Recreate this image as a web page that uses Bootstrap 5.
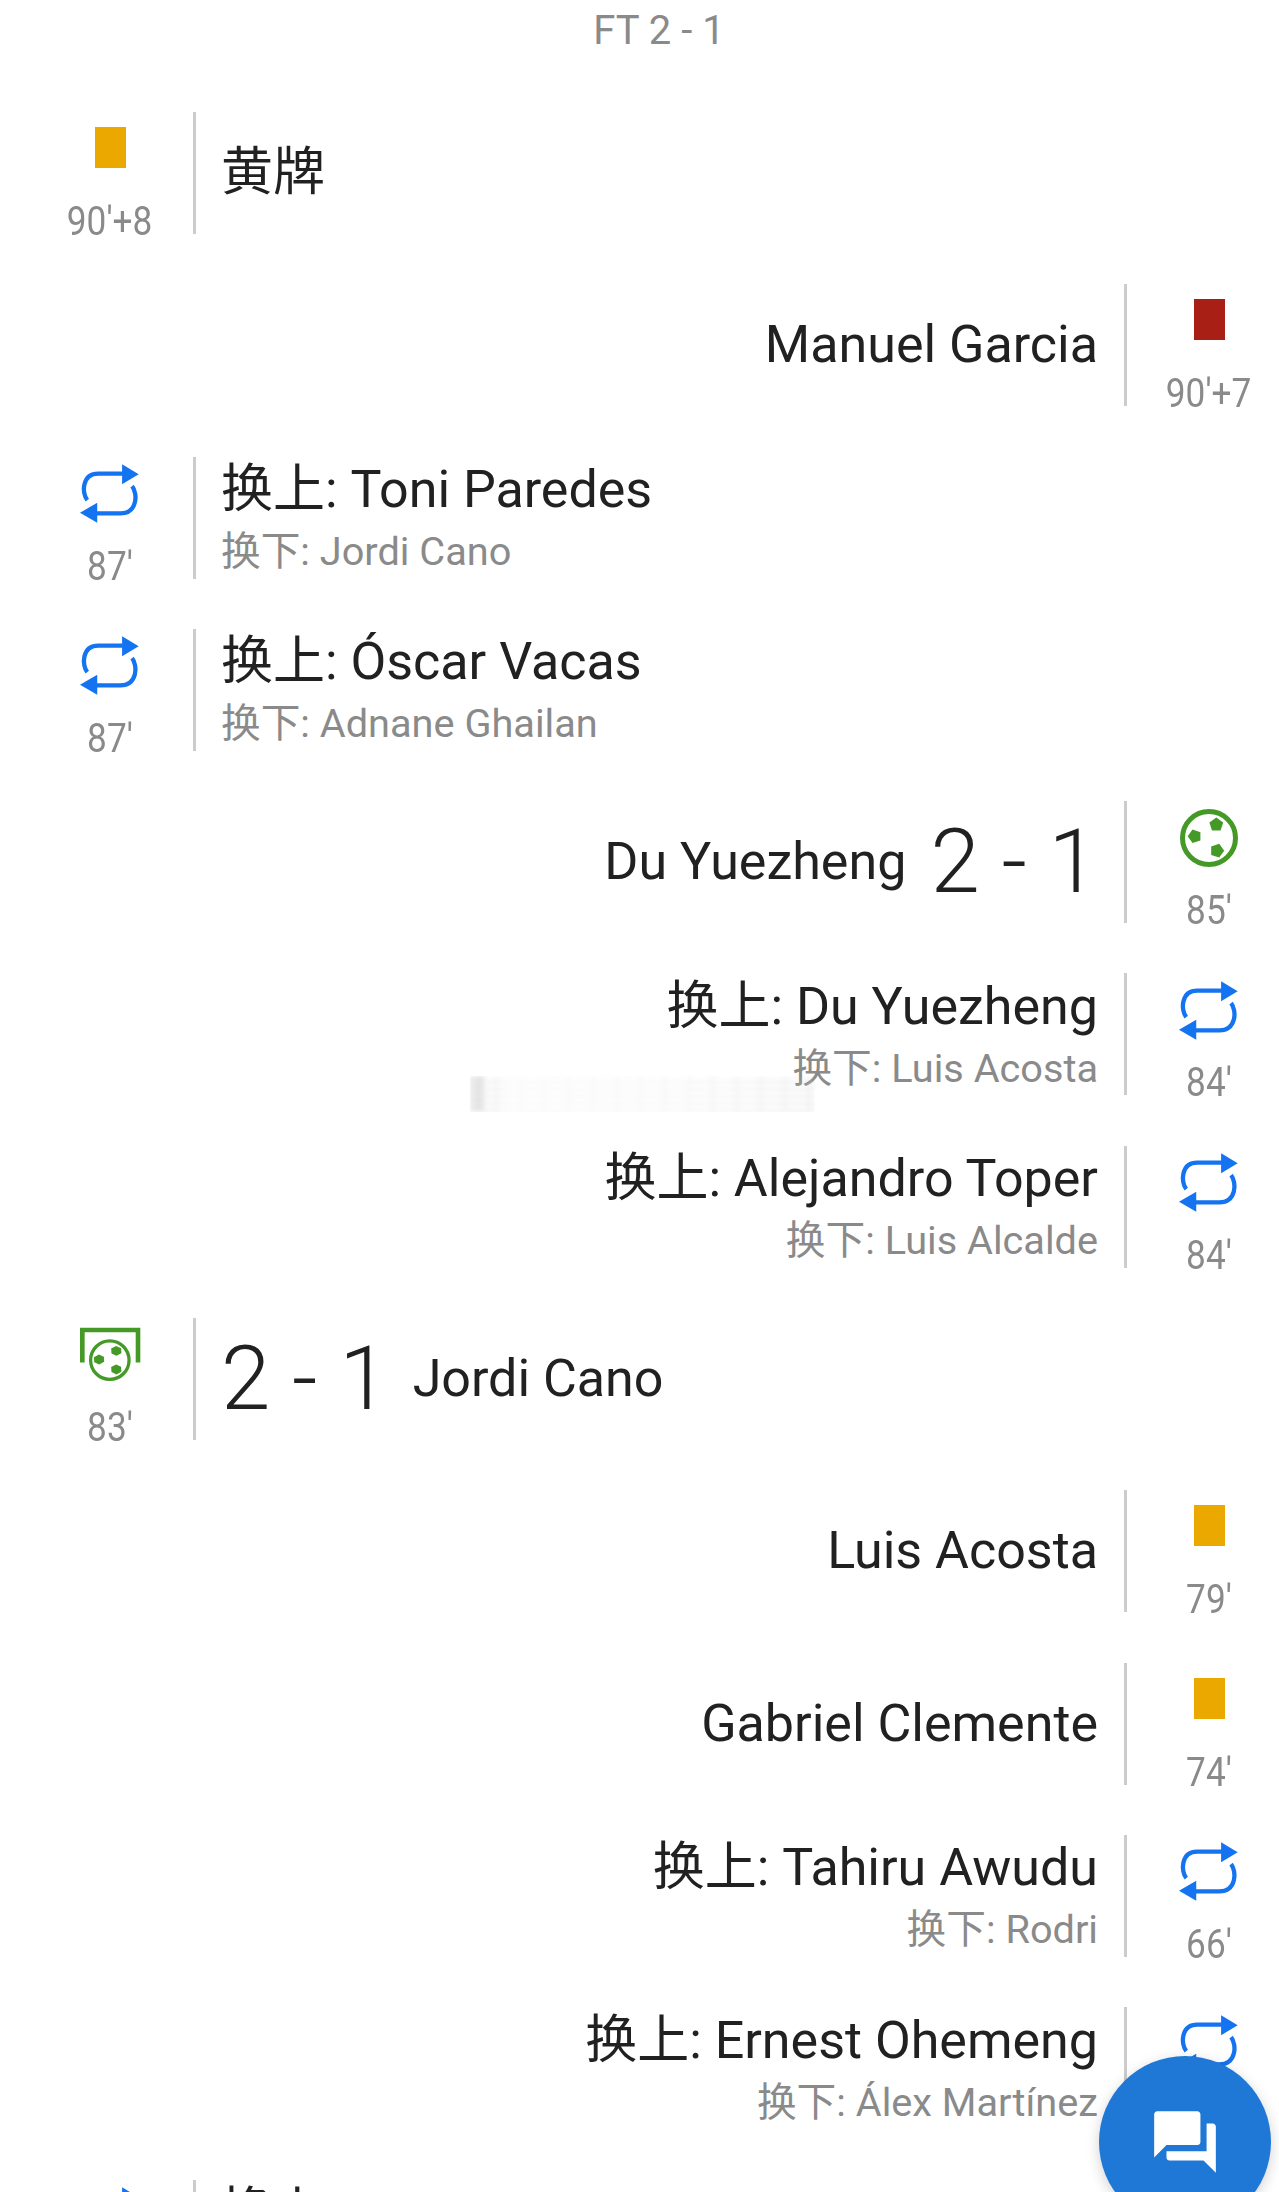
<!DOCTYPE html>
<html lang="zh">
<head>
<meta charset="utf-8">
<title>Match events</title>
<link href="https://cdn.jsdelivr.net/npm/bootstrap@5.3.0/dist/css/bootstrap.min.css" rel="stylesheet">
<style>
html,body{height:2192px;overflow:hidden;background:#fff}
body{font-family:Roboto,"Noto Sans CJK SC",sans-serif;color:#212121;position:relative}
.ev-page{padding-left:39px}
.ev-status{height:112px;padding-top:6px;text-align:center;font-size:40px;line-height:50px;color:#8a8a8a}
.ev-row{height:122px;margin-bottom:50.3px}
.ev-time{width:142px;flex:none;height:122px}
.ev-right .ev-time{width:140px}
.ev-icon{height:74px}
.ev-min{height:24px;line-height:24px;margin-top:24px;font-size:40px;color:#8a8a8a;transform:scaleX(.88);white-space:nowrap}
.ev-body{height:122px;flex:1 1 auto;min-width:0}
.ev-left .ev-body{border-left:3px solid #ccc;margin-left:12px;padding-left:25px}
.ev-right .ev-body{border-right:3px solid #ccc;margin-right:12px;padding-right:26px;text-align:right}
.ev-two{padding-top:7px}
.ev-main{font-size:52px;line-height:62px;white-space:nowrap}
.ev-sub{font-size:39.7px;line-height:62px;color:#8a8a8a;white-space:nowrap}
.ev-name{font-size:52px;line-height:62px}
.ev-score{font-size:89px;line-height:100px;font-weight:300}
.ev-card{width:31px;height:41px;display:block;margin-top:-3px}
.ev-yellow{background:#eba900}
.ev-red{background:#a82015}
.ev-smear{position:absolute;left:470px;top:1076px;width:345px;height:36px;filter:blur(2px);opacity:.35;background:repeating-linear-gradient(0deg,rgba(200,200,200,.8) 0 3px,transparent 3px 7px),repeating-linear-gradient(90deg,rgba(215,215,215,.5) 0 6px,transparent 6px 24px),linear-gradient(90deg,#aaa 0 14px,transparent 14px);-webkit-mask-image:linear-gradient(90deg,#000 0 5%,rgba(0,0,0,.35) 12%,rgba(0,0,0,.5) 60%,#000 100%);mask-image:linear-gradient(90deg,#000 0 5%,rgba(0,0,0,.35) 12%,rgba(0,0,0,.5) 60%,#000 100%)}
.ev-fab{position:absolute;left:1099px;top:2056px;width:172px;height:172px;border-radius:50%;background:#1f78d6;box-shadow:0 4px 14px rgba(0,0,0,.18)}
</style>
</head>
<body>
<svg width="0" height="0" class="position-absolute">
<defs>
<symbol id="i-swap" viewBox="120 60 190 200">
<path d="M145 180C128 160 128 100 178 100H252M280 138C298 160 296 220 245 220H172" fill="none" stroke="#1473f0" stroke-width="13"/>
<path d="M250 72L300 102 250 132ZM175 188L123 218 175 248Z" fill="#1473f0"/>
</symbol>
<symbol id="i-ball" viewBox="0 0 60 60">
<circle cx="30" cy="30" r="26.500" fill="none" stroke="#459a27" stroke-width="5"/>
<path d="M8.700 28.300L13.500 21.600 21.400 24.200V32.400L13.500 35ZM37.300 9.400L44.200 14.400 41.600 22.600H33L30.400 14.400ZM45.200 42.700L40.200 49.600 32.200 47V38.400L40.200 35.800Z" fill="#459a27"/>
</symbol>
<symbol id="i-own" viewBox="115 80 190 175">
<path d="M125 190V92H293V190" fill="none" stroke="#459a27" stroke-width="14"/>
<circle cx="208" cy="183" r="58" fill="none" stroke="#459a27" stroke-width="10"/>
<path d="M175 166l15 7 1 15-15 8-15-7-1-15zM227 140l15 7 1 15-15 8-15-7-1-15zM227 196l15 7 1 15-15 8-15-7-1-15z" fill="#459a27"/>
</symbol>
</defs>
</svg>
<main class="ev-page">
<div class="ev-status">FT 2 - 1</div>

<div class="ev-row ev-left d-flex">
<div class="ev-time d-flex flex-column align-items-center"><div class="ev-icon d-flex align-items-center"><span class="ev-card ev-yellow"></span></div><div class="ev-min">90'+8</div></div>
<div class="ev-body d-flex flex-column justify-content-center"><div class="ev-main">黄牌</div></div>
</div>

<div class="ev-row ev-right d-flex flex-row-reverse">
<div class="ev-time d-flex flex-column align-items-center"><div class="ev-icon d-flex align-items-center"><span class="ev-card ev-red"></span></div><div class="ev-min">90'+7</div></div>
<div class="ev-body d-flex flex-column justify-content-center"><div class="ev-main">Manuel Garcia</div></div>
</div>

<div class="ev-row ev-left d-flex">
<div class="ev-time d-flex flex-column align-items-center"><div class="ev-icon d-flex align-items-center"><svg width="63" height="67"><use href="#i-swap"/></svg></div><div class="ev-min">87'</div></div>
<div class="ev-body ev-two d-flex flex-column justify-content-center"><div class="ev-main">换上: Toni Paredes</div><div class="ev-sub">换下: Jordi Cano</div></div>
</div>

<div class="ev-row ev-left d-flex">
<div class="ev-time d-flex flex-column align-items-center"><div class="ev-icon d-flex align-items-center"><svg width="63" height="67"><use href="#i-swap"/></svg></div><div class="ev-min">87'</div></div>
<div class="ev-body ev-two d-flex flex-column justify-content-center"><div class="ev-main">换上: Óscar Vacas</div><div class="ev-sub">换下: Adnane Ghailan</div></div>
</div>

<div class="ev-row ev-right d-flex flex-row-reverse">
<div class="ev-time d-flex flex-column align-items-center"><div class="ev-icon d-flex align-items-center"><svg width="60" height="60"><use href="#i-ball"/></svg></div><div class="ev-min">85'</div></div>
<div class="ev-body d-flex align-items-center justify-content-end gap-4"><span class="ev-name">Du Yuezheng</span><span class="ev-score">2 - 1</span></div>
</div>

<div class="ev-row ev-right d-flex flex-row-reverse">
<div class="ev-time d-flex flex-column align-items-center"><div class="ev-icon d-flex align-items-center"><svg width="63" height="67"><use href="#i-swap"/></svg></div><div class="ev-min">84'</div></div>
<div class="ev-body ev-two d-flex flex-column justify-content-center"><div class="ev-main">换上: Du Yuezheng</div><div class="ev-sub">换下: Luis Acosta</div></div>
</div>

<div class="ev-row ev-right d-flex flex-row-reverse">
<div class="ev-time d-flex flex-column align-items-center"><div class="ev-icon d-flex align-items-center"><svg width="63" height="67"><use href="#i-swap"/></svg></div><div class="ev-min">84'</div></div>
<div class="ev-body ev-two d-flex flex-column justify-content-center"><div class="ev-main">换上: Alejandro Toper</div><div class="ev-sub">换下: Luis Alcalde</div></div>
</div>

<div class="ev-row ev-left d-flex">
<div class="ev-time d-flex flex-column align-items-center"><div class="ev-icon d-flex align-items-center"><svg width="63" height="58"><use href="#i-own"/></svg></div><div class="ev-min">83'</div></div>
<div class="ev-body d-flex align-items-center gap-4"><span class="ev-score">2 - 1</span><span class="ev-name">Jordi Cano</span></div>
</div>

<div class="ev-row ev-right d-flex flex-row-reverse">
<div class="ev-time d-flex flex-column align-items-center"><div class="ev-icon d-flex align-items-center"><span class="ev-card ev-yellow"></span></div><div class="ev-min">79'</div></div>
<div class="ev-body d-flex flex-column justify-content-center"><div class="ev-main">Luis Acosta</div></div>
</div>

<div class="ev-row ev-right d-flex flex-row-reverse">
<div class="ev-time d-flex flex-column align-items-center"><div class="ev-icon d-flex align-items-center"><span class="ev-card ev-yellow"></span></div><div class="ev-min">74'</div></div>
<div class="ev-body d-flex flex-column justify-content-center"><div class="ev-main">Gabriel Clemente</div></div>
</div>

<div class="ev-row ev-right d-flex flex-row-reverse">
<div class="ev-time d-flex flex-column align-items-center"><div class="ev-icon d-flex align-items-center"><svg width="63" height="67"><use href="#i-swap"/></svg></div><div class="ev-min">66'</div></div>
<div class="ev-body ev-two d-flex flex-column justify-content-center"><div class="ev-main">换上: Tahiru Awudu</div><div class="ev-sub">换下: Rodri</div></div>
</div>

<div class="ev-row ev-right d-flex flex-row-reverse">
<div class="ev-time d-flex flex-column align-items-center"><div class="ev-icon d-flex align-items-center"><svg width="63" height="67"><use href="#i-swap"/></svg></div></div>
<div class="ev-body ev-two d-flex flex-column justify-content-center"><div class="ev-main">换上: Ernest Ohemeng</div><div class="ev-sub">换下: Álex Martínez</div></div>
</div>

<div class="ev-row ev-left d-flex">
<div class="ev-time d-flex flex-column align-items-center"><div class="ev-icon d-flex align-items-center"><svg width="63" height="67"><use href="#i-swap"/></svg></div></div>
<div class="ev-body ev-two d-flex flex-column justify-content-center"><div class="ev-main">换上:</div><div class="ev-sub">&nbsp;</div></div>
</div>
</main>
<div class="ev-smear"></div>
<div class="ev-fab d-flex align-items-center justify-content-center">
<svg width="74" height="74" viewBox="0 0 24 24" fill="#fff"><path d="M21 6h-2v9H6v2c0 .55.45 1 1 1h11l4 4V7c0-.55-.45-1-1-1zm-4 6V3c0-.55-.45-1-1-1H3c-.55 0-1 .45-1 1v14l4-4h10c.55 0 1-.45 1-1z"/></svg>
</div>
<script src="https://cdn.jsdelivr.net/npm/bootstrap@5.3.0/dist/js/bootstrap.bundle.min.js"></script>
</body>
</html>
